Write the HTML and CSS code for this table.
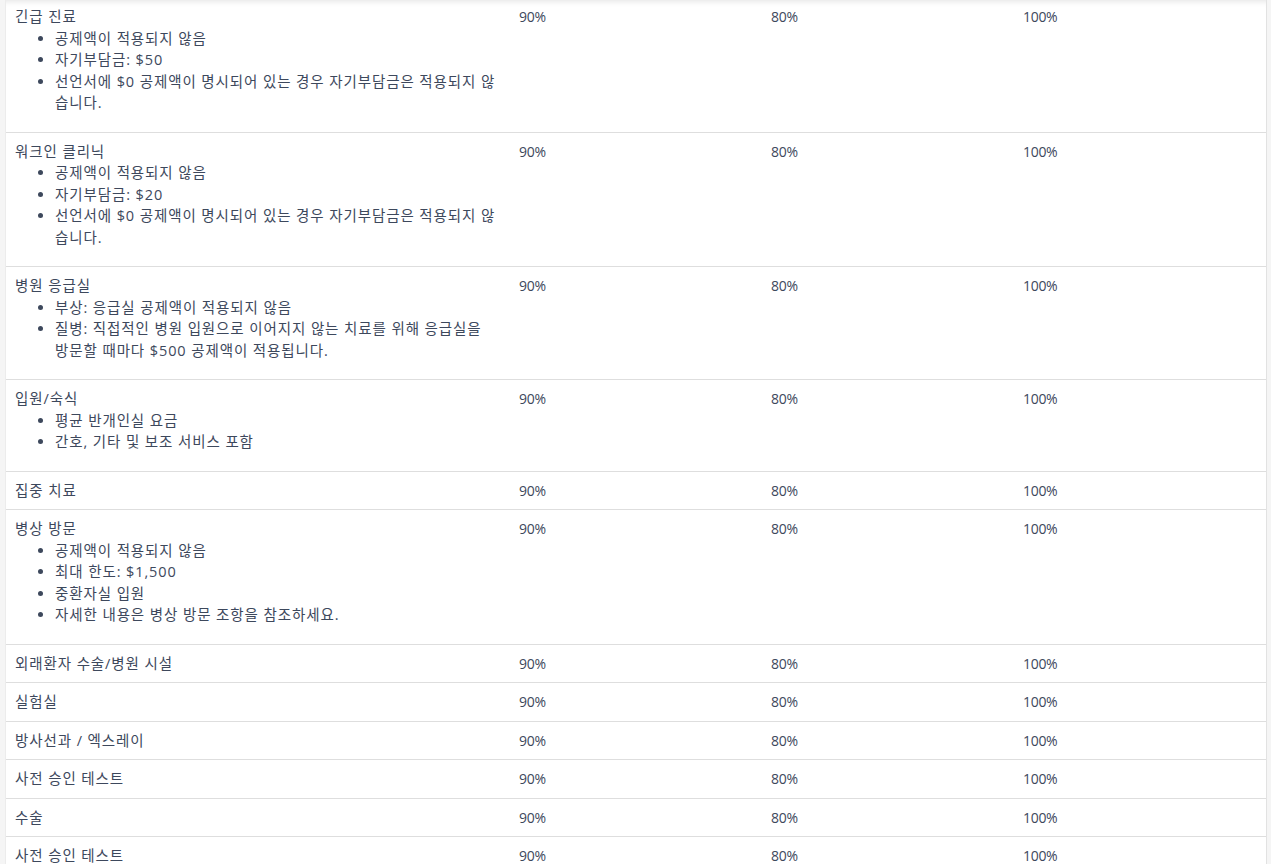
FILE: index.html
```html
<!DOCTYPE html>
<html lang="ko">
<head>
<meta charset="utf-8">
<title>혜택 표</title>
<link rel="stylesheet" href="styles.css">
</head>
<body>
<div class="card">
<table class="benefits">
<colgroup><col class="c-name"><col class="c-val"><col class="c-val"><col class="c-val"></colgroup>
<tbody>
<tr class="first">
<td class="name">긴급 진료
<ul><li>공제액이 적용되지 않음</li><li>자기부담금: $50</li><li>선언서에 $0 공제액이 명시되어 있는 경우 자기부담금은 적용되지 않습니다.</li></ul></td>
<td>90%</td><td>80%</td><td>100%</td>
</tr>
<tr>
<td class="name">워크인 클리닉
<ul><li>공제액이 적용되지 않음</li><li>자기부담금: $20</li><li>선언서에 $0 공제액이 명시되어 있는 경우 자기부담금은 적용되지 않습니다.</li></ul></td>
<td>90%</td><td>80%</td><td>100%</td>
</tr>
<tr>
<td class="name">병원 응급실
<ul><li>부상: 응급실 공제액이 적용되지 않음</li><li>질병: 직접적인 병원 입원으로 이어지지 않는 치료를 위해 응급실을 방문할 때마다 $500 공제액이 적용됩니다.</li></ul></td>
<td>90%</td><td>80%</td><td>100%</td>
</tr>
<tr>
<td class="name">입원/숙식
<ul><li>평균 반개인실 요금</li><li>간호, 기타 및 보조 서비스 포함</li></ul></td>
<td>90%</td><td>80%</td><td>100%</td>
</tr>
<tr><td class="name">집중 치료</td><td>90%</td><td>80%</td><td>100%</td></tr>
<tr>
<td class="name">병상 방문
<ul><li>공제액이 적용되지 않음</li><li>최대 한도: $1,500</li><li>중환자실 입원</li><li>자세한 내용은 병상 방문 조항을 참조하세요.</li></ul></td>
<td>90%</td><td>80%</td><td>100%</td>
</tr>
<tr><td class="name">외래환자 수술/병원 시설</td><td>90%</td><td>80%</td><td>100%</td></tr>
<tr><td class="name">실험실</td><td>90%</td><td>80%</td><td>100%</td></tr>
<tr><td class="name">방사선과 / 엑스레이</td><td>90%</td><td>80%</td><td>100%</td></tr>
<tr><td class="name">사전 승인 테스트</td><td>90%</td><td>80%</td><td>100%</td></tr>
<tr><td class="name">수술</td><td>90%</td><td>80%</td><td>100%</td></tr>
<tr><td class="name">사전 승인 테스트</td><td>90%</td><td>80%</td><td>100%</td></tr>
</tbody>
</table>
</div>
</body>
</html>
```
FILE: styles.css
```css
html, body {
  margin: 0;
  padding: 0;
}
body {
  background: #f5f5f5;
  padding: 0 4px 0 5px;
  font-family: "Open Sans", "Noto Sans CJK KR", sans-serif;
  font-size: 14px;
  color: #3d485c;
}
.card {
  background: #ffffff;
  border-right: 1px solid #e2e2e2;
  border-left: 1px solid #ececec;
  box-shadow: inset 0 7px 6px -6px rgba(0, 0, 0, 0.12);
  min-height: 900px;
}
.benefits {
  width: 100%;
  border-collapse: collapse;
  table-layout: fixed;
}
.c-name { width: 40%; }
.c-val { width: 20%; }
.benefits td {
  vertical-align: top;
  padding: 8px 10px 8px 9px;
  line-height: 21.5px;
  border-bottom: 1px solid #dedede;
  letter-spacing: -0.3px;
}
.benefits td.name {
  font-size: 14.5px;
  letter-spacing: 0.9px;
  word-spacing: 0;
}
.benefits tr.first td {
  padding-top: 6px;
}
.benefits ul {
  margin: 0 0 10px 0;
  padding-left: 40px;
}
```
